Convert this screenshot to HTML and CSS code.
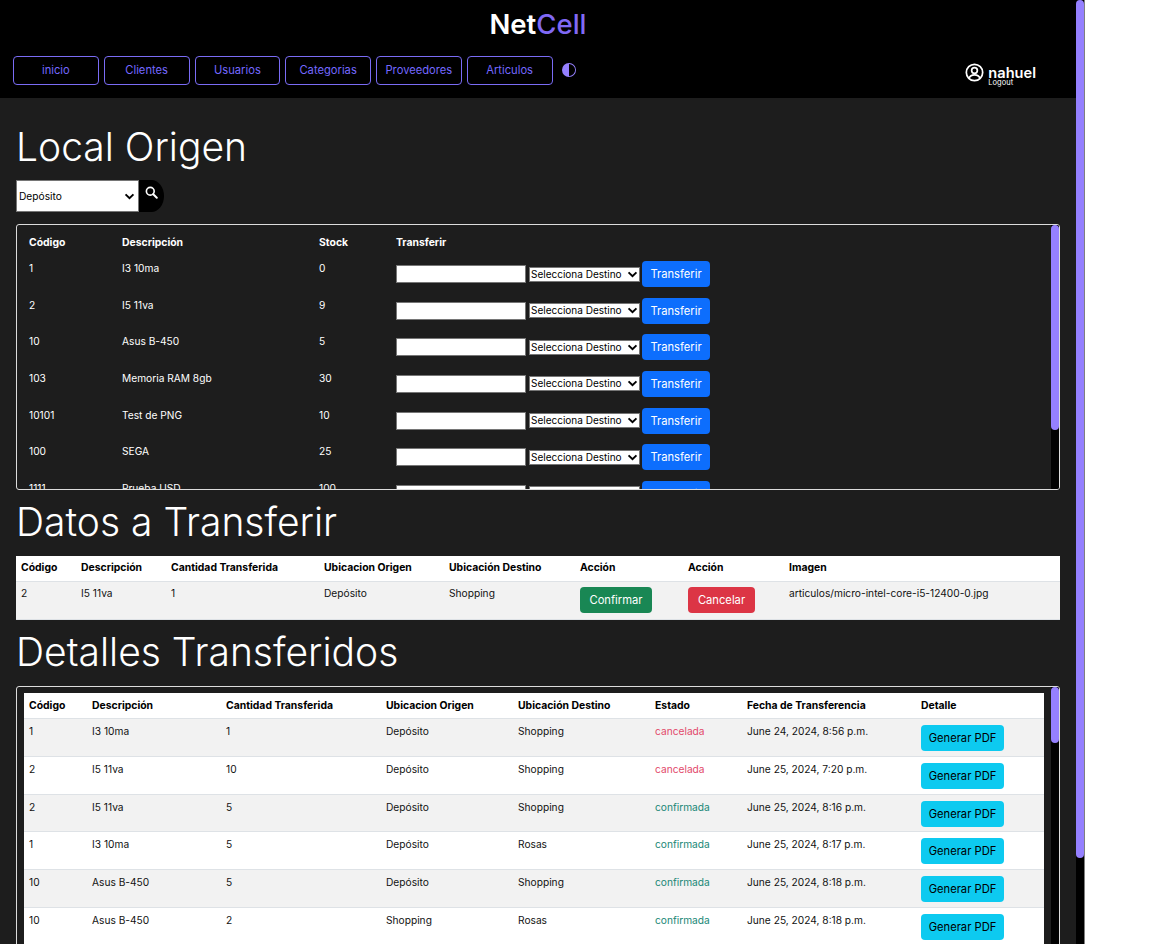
FILE: index.html
```html
<!DOCTYPE html>
<html lang="es">
<head>
<meta charset="utf-8">
<title>NetCell</title>
<link rel="stylesheet" href="styles.css">
</head>
<body>
<div class="page">
  <div class="page-body">
  <header class="topbar">
    <div class="brand">Net<span class="brand-accent">Cell</span></div>
    <div class="nav-row">
      <nav class="nav">
        <a class="nav-btn">inicio</a>
        <a class="nav-btn">Clientes</a>
        <a class="nav-btn">Usuarios</a>
        <a class="nav-btn">Categorias</a>
        <a class="nav-btn">Proveedores</a>
        <a class="nav-btn">Articulos</a>
        <svg class="theme-icon" viewBox="0 0 16 16"><path fill="currentColor" d="M8 15A7 7 0 1 0 8 1v14zm0 1A8 8 0 1 1 8 0a8 8 0 0 1 0 16z"/><path fill="currentColor" d="M8 1a7 7 0 0 0 0 14z"/></svg>
      </nav>
      <div class="user">
        <svg class="user-icon" viewBox="0 0 20 20"><circle cx="10" cy="10" r="8.6" fill="none" stroke="currentColor" stroke-width="1.8"/><circle cx="10" cy="7.8" r="3" fill="none" stroke="currentColor" stroke-width="1.8"/><path d="M4.3 16c.9-2.6 3-3.6 5.7-3.6s4.800 1 5.700 3.600" fill="none" stroke="currentColor" stroke-width="1.8"/></svg>
        <div class="user-text"><div class="user-name">nahuel</div><div class="user-logout">Logout</div></div>
      </div>
    </div>
  </header>
  <main class="main">
    <h1 class="title">Local Origen</h1>
    <form class="search">
      <select class="search-select"><option>Depósito</option></select>
      <button type="button" class="search-btn"><svg viewBox="0 0 16 16" class="search-icon"><circle cx="6.500" cy="6.500" r="4.800" fill="none" stroke="currentColor" stroke-width="2"/><path d="M10.200 10.200 14.500 14.500" stroke="currentColor" stroke-width="2.400" stroke-linecap="round"/></svg></button>
    </form>
    <section class="panel panel-stock">
      <div class="panel-body">
      <table class="tbl tbl-stock">
        <colgroup><col class="s1"><col class="s2"><col class="s3"><col></colgroup>
        <thead><tr><th>Código</th><th>Descripción</th><th>Stock</th><th>Transferir</th></tr></thead>
        <tbody>
          <tr><td>1</td><td>I3 10ma</td><td>0</td><td><div class="transfer"><input class="qty"><select class="dest"><option>Selecciona Destino</option></select><button type="button" class="btn btn-blue">Transferir</button></div></td></tr>
          <tr><td>2</td><td>I5 11va</td><td>9</td><td><div class="transfer"><input class="qty"><select class="dest"><option>Selecciona Destino</option></select><button type="button" class="btn btn-blue">Transferir</button></div></td></tr>
          <tr><td>10</td><td>Asus B-450</td><td>5</td><td><div class="transfer"><input class="qty"><select class="dest"><option>Selecciona Destino</option></select><button type="button" class="btn btn-blue">Transferir</button></div></td></tr>
          <tr><td>103</td><td>Memoria RAM 8gb</td><td>30</td><td><div class="transfer"><input class="qty"><select class="dest"><option>Selecciona Destino</option></select><button type="button" class="btn btn-blue">Transferir</button></div></td></tr>
          <tr><td>10101</td><td>Test de PNG</td><td>10</td><td><div class="transfer"><input class="qty"><select class="dest"><option>Selecciona Destino</option></select><button type="button" class="btn btn-blue">Transferir</button></div></td></tr>
          <tr><td>100</td><td>SEGA</td><td>25</td><td><div class="transfer"><input class="qty"><select class="dest"><option>Selecciona Destino</option></select><button type="button" class="btn btn-blue">Transferir</button></div></td></tr>
          <tr><td>1111</td><td>Prueba USD</td><td>100</td><td><div class="transfer"><input class="qty"><select class="dest"><option>Selecciona Destino</option></select><button type="button" class="btn btn-blue">Transferir</button></div></td></tr>
        </tbody>
      </table>
      </div>
      <div class="rail"><div class="thumb thumb-stock"></div></div>
    </section>
    <h1 class="title">Datos a Transferir</h1>
    <table class="tbl tbl-light tbl-pending">
      <colgroup><col class="p1"><col class="p2"><col class="p3"><col class="p4"><col class="p5"><col class="p6"><col class="p7"><col></colgroup>
      <thead><tr><th>Código</th><th>Descripción</th><th>Cantidad Transferida</th><th>Ubicacion Origen</th><th>Ubicación Destino</th><th>Acción</th><th>Acción</th><th>Imagen</th></tr></thead>
      <tbody><tr><td>2</td><td>I5 11va</td><td>1</td><td>Depósito</td><td>Shopping</td><td><button type="button" class="btn btn-green">Confirmar</button></td><td><button type="button" class="btn btn-red">Cancelar</button></td><td>articulos/micro-intel-core-i5-12400-0.jpg</td></tr></tbody>
    </table>
    <h1 class="title">Detalles Transferidos</h1>
    <section class="panel panel-history">
      <div class="panel-body">
      <table class="tbl tbl-light tbl-history">
        <colgroup><col class="h1"><col class="h2"><col class="h3"><col class="h4"><col class="h5"><col class="h6"><col class="h7"><col></colgroup>
        <thead><tr><th>Código</th><th>Descripción</th><th>Cantidad Transferida</th><th>Ubicacion Origen</th><th>Ubicación Destino</th><th>Estado</th><th>Fecha de Transferencia</th><th>Detalle</th></tr></thead>
        <tbody>
          <tr><td>1</td><td>I3 10ma</td><td>1</td><td>Depósito</td><td>Shopping</td><td class="st-cancel">cancelada</td><td>June 24, 2024, 8:56 p.m.</td><td><button type="button" class="btn btn-cyan">Generar PDF</button></td></tr>
          <tr><td>2</td><td>I5 11va</td><td>10</td><td>Depósito</td><td>Shopping</td><td class="st-cancel">cancelada</td><td>June 25, 2024, 7:20 p.m.</td><td><button type="button" class="btn btn-cyan">Generar PDF</button></td></tr>
          <tr><td>2</td><td>I5 11va</td><td>5</td><td>Depósito</td><td>Shopping</td><td class="st-ok">confirmada</td><td>June 25, 2024, 8:16 p.m.</td><td><button type="button" class="btn btn-cyan">Generar PDF</button></td></tr>
          <tr><td>1</td><td>I3 10ma</td><td>5</td><td>Depósito</td><td>Rosas</td><td class="st-ok">confirmada</td><td>June 25, 2024, 8:17 p.m.</td><td><button type="button" class="btn btn-cyan">Generar PDF</button></td></tr>
          <tr><td>10</td><td>Asus B-450</td><td>5</td><td>Depósito</td><td>Shopping</td><td class="st-ok">confirmada</td><td>June 25, 2024, 8:18 p.m.</td><td><button type="button" class="btn btn-cyan">Generar PDF</button></td></tr>
          <tr><td>10</td><td>Asus B-450</td><td>2</td><td>Shopping</td><td>Rosas</td><td class="st-ok">confirmada</td><td>June 25, 2024, 8:18 p.m.</td><td><button type="button" class="btn btn-cyan">Generar PDF</button></td></tr>
        </tbody>
      </table>
      </div>
      <div class="rail"><div class="thumb thumb-history"></div></div>
    </section>
  </main>
  </div>
  <div class="rail"><div class="thumb thumb-page"></div></div>
</div>
</body>
</html>
```
FILE: styles.css
```css
* { box-sizing: border-box; }
html, body { margin: 0; height: 100%; background: #fff; overflow: hidden; }
body { font-family: Inter, "Open Sans", sans-serif; }

.page {
  display: flex;
  width: 1085px;
  height: 944px;
  border-right: 1px solid #808080;
  background: #1d1d1d;
}
.page-body { flex: 1; min-width: 0; overflow: hidden; }
.rail { flex: none; width: 8px; background: #000; }
.thumb { background: #9580ff; border-radius: 4px; }
.thumb-page { height: 858px; }
.thumb-stock { height: 205px; }
.thumb-history { height: 56px; }

.topbar { background: #000; height: 98px; padding-top: 7px; }
.brand { text-align: center; font-size: 27.5px; line-height: 34px; font-weight: 600; color: #fff; height: 49px; }
.brand-accent { color: #8069f5; font-weight: 500; }
.nav-row { display: flex; justify-content: space-between; align-items: flex-start; padding: 0 40px 0 13px; }
.nav { display: flex; align-items: center; gap: 5px; }
.nav-btn {
  display: flex; align-items: center; justify-content: center;
  width: 85.75px; height: 29px; padding-bottom: 1px;
  border: 1px solid #7a6cf5; border-radius: 4px;
  color: #7468ff; font-size: 11.2px;
}
.theme-icon { width: 14px; height: 14px; color: #9580ff; margin: -1px 0 0 4px; }
.user { display: flex; align-items: flex-start; gap: 4px; color: #fff; padding-top: 7px; }
.user-icon { width: 19px; height: 19px; }
.user-name { font-size: 14.6px; line-height: 14px; font-weight: 600; margin-top: 3px; }
.user-logout { font-size: 7.5px; line-height: 8px; margin-top: -1px; }

.main { padding: 26px 16px 12px; }
.title { margin: 0; font-size: 39px; line-height: 46px; font-weight: 300; color: #fff; }
.panel + .title, .tbl + .title { margin-top: 9px; }

.search { display: flex; height: 32px; margin: 10px 0 12px; }
.search-select, .dest {
  appearance: none;
  background-color: #fff;
  background-image: url("data:image/svg+xml,%3Csvg xmlns='http://www.w3.org/2000/svg' viewBox='0 0 12 8'%3E%3Cpath d='M1.500 1.500 6 6l4.500-4.500' fill='none' stroke='%23000' stroke-width='2.200'/%3E%3C/svg%3E");
  background-repeat: no-repeat;
  color: #000;
  border: 1px solid #767676;
  border-radius: 0;
  font-family: inherit;
}
.search-select { width: 123px; height: 32px; padding: 0 0 0 2px; font-size: 10.2px; background-size: 11px 7px; background-position: right 3px center; }
.search-btn { width: 25px; height: 32px; padding: 0 0 4px; border: 0; background: #000; color: #fff; border-radius: 0 50% 50% 0; }
.search-icon { width: 13px; height: 13px; }

.panel { display: flex; border: 1px solid #dcdcdc; border-radius: 3px; overflow: hidden; }
.panel-body { flex: 1; min-width: 0; overflow: hidden; padding: 6px 7px; }
.panel-stock { height: 266px; }
.panel-history { height: 340px; margin-top: 11px; }

.tbl { width: 100%; table-layout: fixed; border-collapse: collapse; font-size: 10.2px; }
.tbl-pending { margin-top: 11px; }
.tbl th { text-align: left; font-weight: 700; font-size: 10.4px; }
.tbl th, .tbl td { padding: 0 5px; vertical-align: top; }
.tbl-stock { color: #fff; }
.tbl-stock th { height: 25px; padding-top: 5px; }
.tbl-stock td { height: 36.65px; padding-top: 6px; }
.s1 { width: 93px; } .s2 { width: 197px; } .s3 { width: 77px; }

.transfer { display: flex; align-items: center; margin-top: -1px; height: 26px; }
.qty { width: 130px; height: 18px; margin: 0 3px 0 0; border: 1px solid #767676; background: #fff; padding: 0; }
.dest { width: 111px; height: 15px; margin: 0 2px 0 0; padding: 0 0 1px 1px; font-size: 10px; background-size: 11px 7px; background-position: right 1px center; }
.btn { height: 26px; padding: 0; border: 0; border-radius: 4px; font-family: inherit; font-size: 11.2px; display: inline-block; }
.btn-blue { width: 68px; background: #0d6efd; color: #fff; }
.btn-green { width: 72px; background: #198754; color: #fff; }
.btn-red { width: 67px; background: #dc3545; color: #fff; }
.btn-cyan { width: 83px; background: #0dcaf0; color: #000; }

.tbl-light { background: #fff; color: #111; }
.tbl-light th { height: 25px; padding-top: 5px; border-bottom: 1px solid #dee2e6; color: #000; }
.tbl-light td { padding-top: 5px; border-bottom: 1px solid #dee2e6; }
.tbl-light tbody tr:nth-child(odd) { background: #f2f2f2; }
.tbl-pending td { height: 38px; }
.tbl-history th { height: 26px; padding-top: 6px; }
.tbl-history td { height: 37.8px; padding-top: 6px; }
.tbl-pending td:has(.btn) { padding-top: 5px; }
.tbl-history td:has(.btn) { padding-top: 6px; }
.p1 { width: 60px; } .p2 { width: 90px; } .p3 { width: 153px; } .p4 { width: 125px; } .p5 { width: 131px; } .p6 { width: 108px; } .p7 { width: 101px; }
.h1 { width: 63px; } .h2 { width: 134px; } .h3 { width: 160px; } .h4 { width: 132px; } .h5 { width: 137px; } .h6 { width: 92px; } .h7 { width: 174px; }
.st-cancel { color: #e2486a; }
.st-ok { color: #198776; }
```
